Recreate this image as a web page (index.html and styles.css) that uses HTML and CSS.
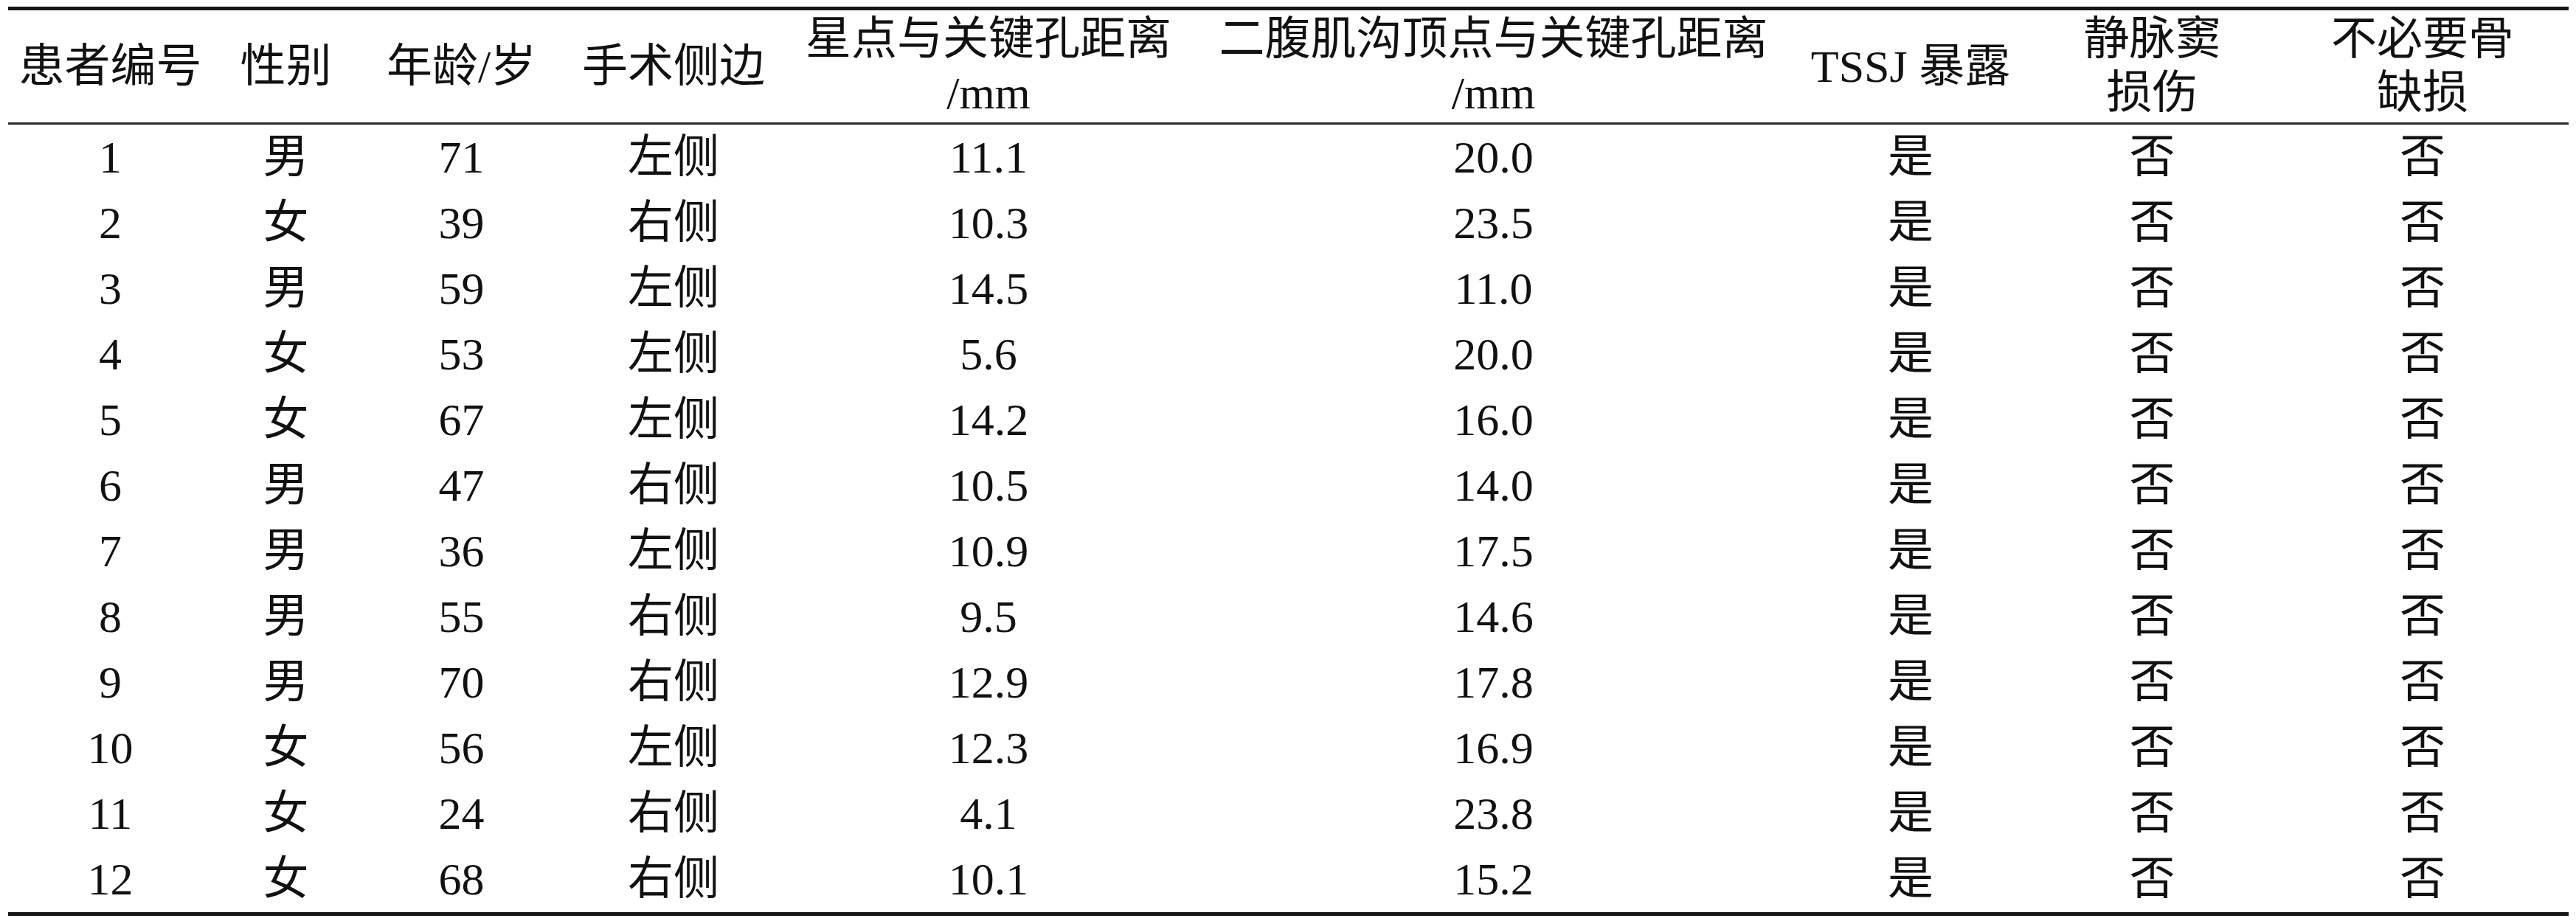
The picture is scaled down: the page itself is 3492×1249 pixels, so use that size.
FILE: index.html
```html
<!DOCTYPE html>
<html lang="zh-CN">
<head>
<meta charset="utf-8">
<title>患者资料</title>
<link rel="stylesheet" href="styles.css">
</head>
<body>
<div class="page">
<table class="data">
<colgroup>
<col class="c1"><col class="c2"><col class="c3"><col class="c4"><col class="c5"><col class="c6"><col class="c7"><col class="c8"><col class="c9">
</colgroup>
<thead>
<tr>
<th>患者编号</th>
<th>性别</th>
<th>年龄/岁</th>
<th>手术侧边</th>
<th>星点与关键孔距离<br>/mm</th>
<th>二腹肌沟顶点与关键孔距离<br>/mm</th>
<th>TSSJ 暴露</th>
<th>静脉窦<br>损伤</th>
<th>不必要骨<br>缺损</th>
</tr>
</thead>
<tbody>
<tr><td>1</td><td>男</td><td>71</td><td>左侧</td><td>11.1</td><td>20.0</td><td>是</td><td>否</td><td>否</td></tr>
<tr><td>2</td><td>女</td><td>39</td><td>右侧</td><td>10.3</td><td>23.5</td><td>是</td><td>否</td><td>否</td></tr>
<tr><td>3</td><td>男</td><td>59</td><td>左侧</td><td>14.5</td><td>11.0</td><td>是</td><td>否</td><td>否</td></tr>
<tr><td>4</td><td>女</td><td>53</td><td>左侧</td><td>5.6</td><td>20.0</td><td>是</td><td>否</td><td>否</td></tr>
<tr><td>5</td><td>女</td><td>67</td><td>左侧</td><td>14.2</td><td>16.0</td><td>是</td><td>否</td><td>否</td></tr>
<tr><td>6</td><td>男</td><td>47</td><td>右侧</td><td>10.5</td><td>14.0</td><td>是</td><td>否</td><td>否</td></tr>
<tr><td>7</td><td>男</td><td>36</td><td>左侧</td><td>10.9</td><td>17.5</td><td>是</td><td>否</td><td>否</td></tr>
<tr><td>8</td><td>男</td><td>55</td><td>右侧</td><td>9.5</td><td>14.6</td><td>是</td><td>否</td><td>否</td></tr>
<tr><td>9</td><td>男</td><td>70</td><td>右侧</td><td>12.9</td><td>17.8</td><td>是</td><td>否</td><td>否</td></tr>
<tr><td>10</td><td>女</td><td>56</td><td>左侧</td><td>12.3</td><td>16.9</td><td>是</td><td>否</td><td>否</td></tr>
<tr><td>11</td><td>女</td><td>24</td><td>右侧</td><td>4.1</td><td>23.8</td><td>是</td><td>否</td><td>否</td></tr>
<tr><td>12</td><td>女</td><td>68</td><td>右侧</td><td>10.1</td><td>15.2</td><td>是</td><td>否</td><td>否</td></tr>
</tbody>
</table>
</div>
</body>
</html>
```
FILE: styles.css
```css
html, body {
  margin: 0;
  padding: 0;
  background: #ffffff;
}
.page {
  padding: 9px 10px 0 11px;
}
.data {
  width: 3471px;
  table-layout: fixed;
  border-collapse: separate;
  border-spacing: 0;
  border-top: 5px solid #161616;
  border-bottom: 5px solid #161616;
  font-family: "Liberation Serif", "Noto Sans CJK SC", serif;
  font-size: 62px;
  color: #111111;
}
.c1 { width: 277px; }
.c2 { width: 199px; }
.c3 { width: 277px; }
.c4 { width: 298px; }
.c5 { width: 556px; }
.c6 { width: 813px; }
.c7 { width: 318px; }
.c8 { width: 337px; }
.c9 { width: 396px; }
.data th {
  font-weight: normal;
  height: 152px;
  padding: 0;
  line-height: 73px;
  text-align: center;
  vertical-align: middle;
  border-bottom: 3px solid #2a2a2a;
  white-space: nowrap;
}
.data td {
  height: 89px;
  padding: 0;
  line-height: 89px;
  text-align: center;
  vertical-align: middle;
  white-space: nowrap;
}
```
